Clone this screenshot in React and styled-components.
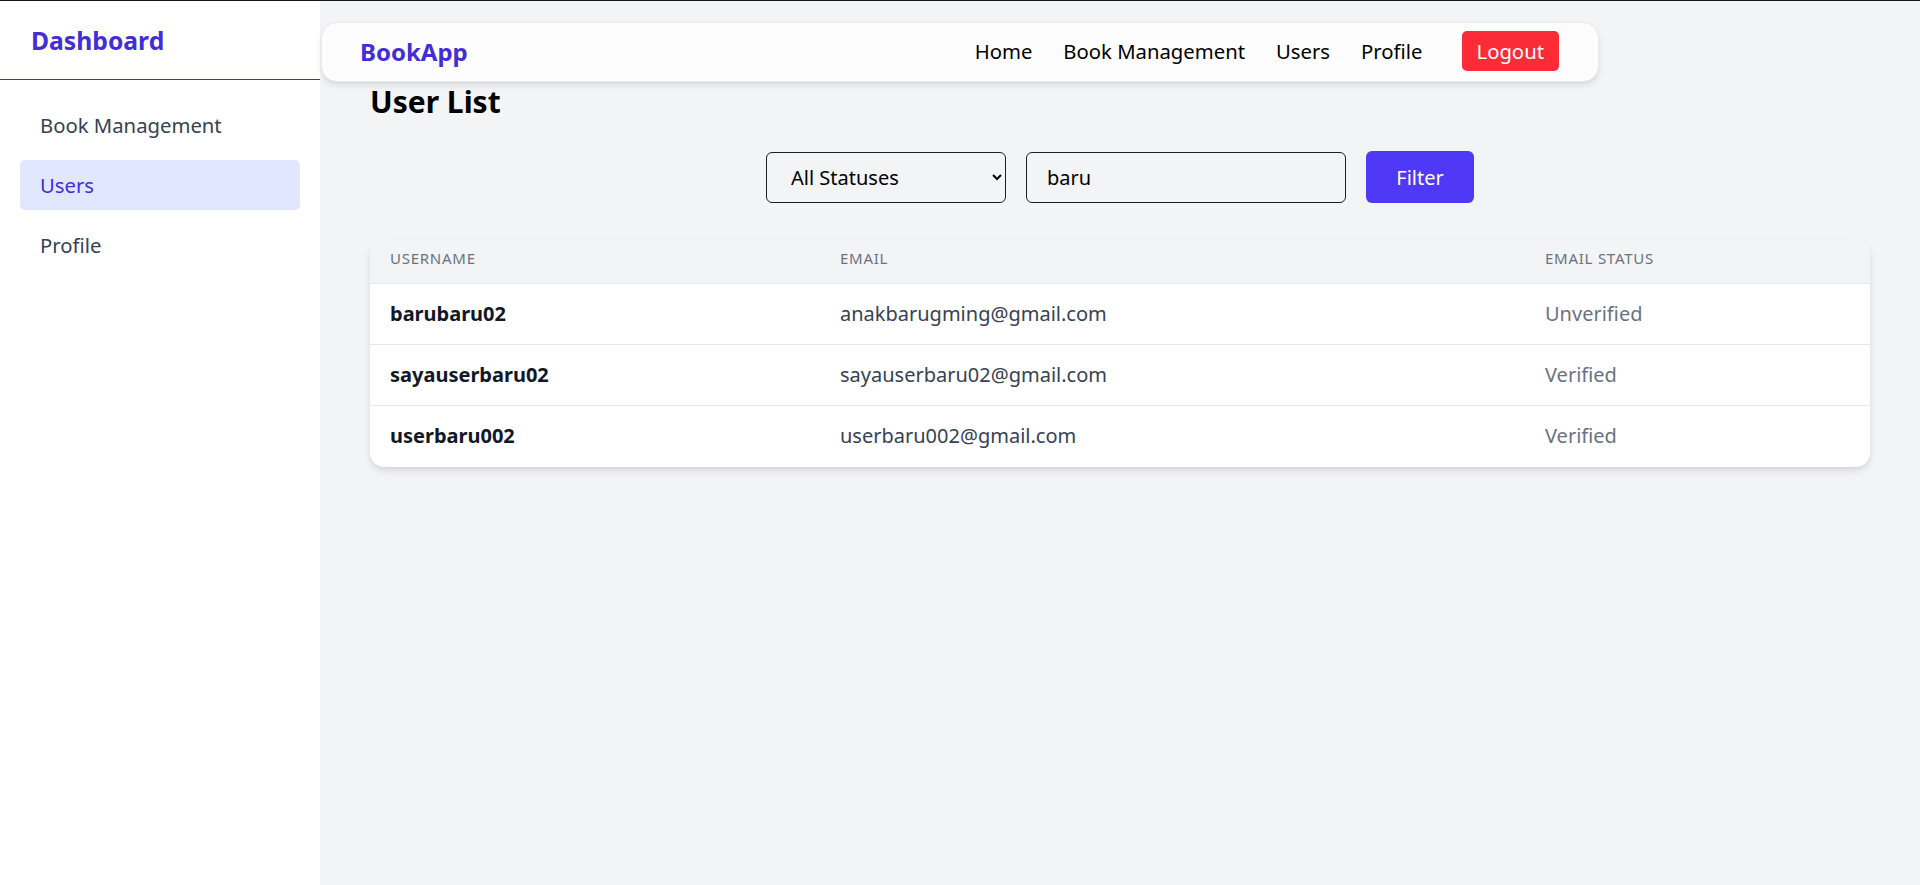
import React from "react";
import styled, { createGlobalStyle } from "styled-components";

const Global = createGlobalStyle`
  * { box-sizing: border-box; }
  html, body { margin: 0; padding: 0; }
  body {
    font-family: "Noto Sans", "Open Sans", sans-serif;
    background: #f3f4f6;
    border-top: 1px solid #16161f;
    color: #101828;
  }
`;

const Layout = styled.div`
  display: flex;
  min-height: 884px;
`;

const Sidebar = styled.aside`
  width: 320px;
  flex-shrink: 0;
  background: #ffffff;
  display: flex;
  flex-direction: column;
`;

const SideHeader = styled.div`
  height: 79px;
  display: flex;
  align-items: center;
  padding: 0 31px;
  border-bottom: 1px solid #432dd7;
`;

const Brand = styled.div`
  font-weight: 700;
  font-size: ${(p) => p.$size || "24.7px"};
  color: #432dd7;
  letter-spacing: 0;
`;

const SideNav = styled.nav`
  display: flex;
  flex-direction: column;
  gap: 10px;
  padding: 20px 20px;
`;

const SideItem = styled.a`
  display: flex;
  align-items: center;
  height: 50px;
  padding: 0 20px;
  border-radius: 5px;
  font-size: 20.3px;
  color: ${(p) => (p.$active ? "#432dd7" : "#364153")};
  background: ${(p) => (p.$active ? "#e0e7ff" : "transparent")};
  text-decoration: none;
  cursor: pointer;
`;

const Main = styled.main`
  flex: 1;
  display: flex;
  flex-direction: column;
`;

const TopBar = styled.header`
  width: 1278px;
  height: 60px;
  margin: 21px 0 0 1px;
  padding: 0 39px 2px 38px;
  background: #fdfdfd;
  border-radius: 16px;
  border: 1px solid #e9eaee;
  box-shadow: 0 4px 8px -2px rgba(0, 0, 0, 0.12), 0 2px 4px -2px rgba(0, 0, 0, 0.08);
  display: flex;
  align-items: center;
  justify-content: space-between;
`;

const TopLinks = styled.div`
  display: flex;
  align-items: center;
  gap: 31px;
`;

const TopLink = styled.a`
  font-size: 20.3px;
  color: #000000;
  text-decoration: none;
  cursor: pointer;
`;

const LogoutButton = styled.button`
  height: 40px;
  padding: 0 15px;
  margin-left: 8px;
  border: none;
  border-radius: 5px;
  background: #fb2c36;
  color: #ffffff;
  font-family: inherit;
  font-size: 20.3px;
  cursor: pointer;
`;

const Content = styled.section`
  padding: 0 50px;
  display: flex;
  flex-direction: column;
`;

const Title = styled.h1`
  margin: 1px 0 0;
  font-size: 30px;
  line-height: 38px;
  font-weight: 700;
  color: #000000;
`;

const FilterRow = styled.form`
  margin-top: 30px;
  display: flex;
  justify-content: center;
  align-items: center;
  gap: 20px;
`;

const Select = styled.select`
  width: 240px;
  height: 51px;
  padding: 0 16px 0 20px;
  border: 1px solid #1e1e1e;
  border-radius: 6px;
  background: transparent;
  font-family: inherit;
  font-size: 20px;
  color: #000000;
`;

const Input = styled.input`
  width: 320px;
  height: 51px;
  padding: 0 20px;
  border: 1px solid #1e1e1e;
  border-radius: 6px;
  background: transparent;
  font-family: inherit;
  font-size: 20px;
  color: #000000;
  outline: none;
`;

const FilterButton = styled.button`
  width: 108px;
  height: 52px;
  border: none;
  border-radius: 6px;
  background: #4f39f6;
  color: #ffffff;
  font-family: inherit;
  font-size: 20px;
  cursor: pointer;
`;

const Card = styled.div`
  margin-top: 37px;
  background: #ffffff;
  border-radius: 14px;
  overflow: hidden;
  box-shadow: 0 4px 8px -1px rgba(0, 0, 0, 0.12), 0 2px 4px -2px rgba(0, 0, 0, 0.08);
`;

const Table = styled.table`
  width: 100%;
  border-collapse: collapse;
  table-layout: fixed;
`;

const Th = styled.th`
  width: ${(p) => p.$w};
  padding: 8px 20px 15px;
  line-height: 20px;
  text-align: left;
  vertical-align: top;
  font-size: 15px;
  font-weight: 400;
  letter-spacing: 0.05em;
  text-transform: uppercase;
  color: #6a7282;
  background: #f3f4f6;
  border-bottom: 1px solid #e5e7eb;
`;

const Tr = styled.tr`
  & + & td {
    border-top: 1px solid #e5e7eb;
  }
`;

const Td = styled.td`
  height: 61px;
  padding: 0 20px 2px;
  font-size: 20px;
  font-weight: ${(p) => (p.$bold ? 700 : 400)};
  color: ${(p) => p.$color || "#364153"};
`;

const users = [
  { username: "barubaru02", email: "anakbarugming@gmail.com", status: "Unverified" },
  { username: "sayauserbaru02", email: "sayauserbaru02@gmail.com", status: "Verified" },
  { username: "userbaru002", email: "userbaru002@gmail.com", status: "Verified" },
];

export default function App() {
  return (
    <>
      <Global />
      <Layout>
        <Sidebar>
          <SideHeader>
            <Brand>Dashboard</Brand>
          </SideHeader>
          <SideNav>
            <SideItem>Book Management</SideItem>
            <SideItem $active>Users</SideItem>
            <SideItem>Profile</SideItem>
          </SideNav>
        </Sidebar>
        <Main>
          <TopBar>
            <Brand $size="24px">BookApp</Brand>
            <TopLinks>
              <TopLink>Home</TopLink>
              <TopLink>Book Management</TopLink>
              <TopLink>Users</TopLink>
              <TopLink>Profile</TopLink>
              <LogoutButton>Logout</LogoutButton>
            </TopLinks>
          </TopBar>
          <Content>
            <Title>User List</Title>
            <FilterRow onSubmit={(e) => e.preventDefault()}>
              <Select defaultValue="all">
                <option value="all">All Statuses</option>
                <option value="verified">Verified</option>
                <option value="unverified">Unverified</option>
              </Select>
              <Input defaultValue="baru" />
              <FilterButton type="submit">Filter</FilterButton>
            </FilterRow>
            <Card>
              <Table>
                <thead>
                  <tr>
                    <Th $w="450px">Username</Th>
                    <Th $w="705px">Email</Th>
                    <Th $w="345px">Email Status</Th>
                  </tr>
                </thead>
                <tbody>
                  {users.map((u) => (
                    <Tr key={u.username}>
                      <Td $bold $color="#101828">{u.username}</Td>
                      <Td>{u.email}</Td>
                      <Td $color="#6a7282">{u.status}</Td>
                    </Tr>
                  ))}
                </tbody>
              </Table>
            </Card>
          </Content>
        </Main>
      </Layout>
    </>
  );
}
